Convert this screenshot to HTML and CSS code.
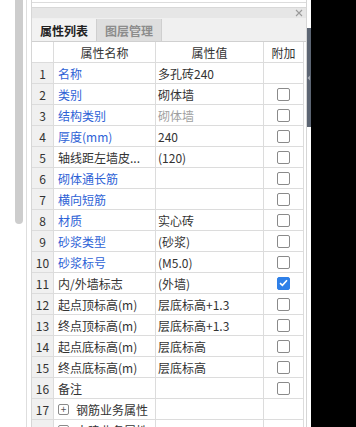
FILE: index.html
```html
<!DOCTYPE html>
<html lang="zh-CN">
<head>
<meta charset="UTF-8">
<title>属性列表</title>
<link rel="stylesheet" href="styles.css">
</head>
<body>

<div class="screen">
  <div class="gutter"><div class="gutter-thumb"></div></div>
  <div class="rule"></div>

  <div class="main">
    <div class="prev-box"></div>
    <div class="panel">
      <div class="titlebar">
        <svg class="close" width="8" height="8" viewBox="0 0 8 8"><path d="M1 1L7 7M7 1L1 7" stroke="#9a9a9a" stroke-width="1.1"/></svg>
      </div>
      <div class="tabs">
        <div class="tab active">属性列表</div>
        <div class="tab">图层管理</div>
      </div>

      <div class="grid">
        <div class="cell head"></div>
        <div class="cell head">属性名称</div>
        <div class="cell head">属性值</div>
        <div class="cell head">附加</div>

        <div class="cell num">1</div><div class="cell name blue">名称</div><div class="cell val">多孔砖240</div><div class="cell add"></div>
        <div class="cell num">2</div><div class="cell name blue">类别</div><div class="cell val">砌体墙</div><div class="cell add"><span class="box"></span></div>
        <div class="cell num">3</div><div class="cell name blue">结构类别</div><div class="cell val muted">砌体墙</div><div class="cell add"><span class="box"></span></div>
        <div class="cell num">4</div><div class="cell name blue">厚度(mm)</div><div class="cell val">240</div><div class="cell add"><span class="box"></span></div>
        <div class="cell num">5</div><div class="cell name">轴线距左墙皮...</div><div class="cell val">(120)</div><div class="cell add"><span class="box"></span></div>
        <div class="cell num">6</div><div class="cell name blue">砌体通长筋</div><div class="cell val"></div><div class="cell add"><span class="box"></span></div>
        <div class="cell num">7</div><div class="cell name blue">横向短筋</div><div class="cell val"></div><div class="cell add"><span class="box"></span></div>
        <div class="cell num">8</div><div class="cell name blue">材质</div><div class="cell val">实心砖</div><div class="cell add"><span class="box"></span></div>
        <div class="cell num">9</div><div class="cell name blue">砂浆类型</div><div class="cell val">(砂浆)</div><div class="cell add"><span class="box"></span></div>
        <div class="cell num">10</div><div class="cell name blue">砂浆标号</div><div class="cell val">(M5.0)</div><div class="cell add"><span class="box"></span></div>
        <div class="cell num">11</div><div class="cell name">内/外墙标志</div><div class="cell val">(外墙)</div><div class="cell add"><span class="box checked"><svg width="9" height="8" viewBox="0 0 9 8"><path d="M1 4.2L3.4 6.4L8 1.3" fill="none" stroke="#fff" stroke-width="1.6"/></svg></span></div>
        <div class="cell num">12</div><div class="cell name">起点顶标高(m)</div><div class="cell val">层底标高+1.3</div><div class="cell add"><span class="box"></span></div>
        <div class="cell num">13</div><div class="cell name">终点顶标高(m)</div><div class="cell val">层底标高+1.3</div><div class="cell add"><span class="box"></span></div>
        <div class="cell num">14</div><div class="cell name">起点底标高(m)</div><div class="cell val">层底标高</div><div class="cell add"><span class="box"></span></div>
        <div class="cell num">15</div><div class="cell name">终点底标高(m)</div><div class="cell val">层底标高</div><div class="cell add"><span class="box"></span></div>
        <div class="cell num">16</div><div class="cell name">备注</div><div class="cell val"></div><div class="cell add"><span class="box"></span></div>
        <div class="cell num">17</div><div class="cell name"><span class="plus">+</span>钢筋业务属性</div><div class="cell val"></div><div class="cell add"></div>
        <div class="cell num">18</div><div class="cell name"><span class="plus">+</span>土建业务属性</div><div class="cell val"></div><div class="cell add"></div>
      </div>
    </div>
  </div>

  <div class="vscroll">
    <div class="vthumb">
      <svg width="4" height="6" viewBox="0 0 4 6"><path d="M3 0.5L0.5 3L3 5.5Z" fill="#a8adb5"/></svg>
    </div>
  </div>
</div>

</body>
</html>
```

FILE: styles.css
```css
body { margin: 0; background: #000; font-family: "Noto Sans CJK SC", "Noto Sans", sans-serif; font-size: 12px; color: #333; }
.screen { display: flex; width: 311px; height: 427px; background: #fff; overflow: hidden; }

.gutter { width: 26px; flex-shrink: 0; }
.gutter-thumb { margin-left: 15px; width: 8px; height: 224px; background: #cdcdcd; border-radius: 0 0 4px 4px; }
.rule { width: 1px; background: #dedede; margin-right: 4px; flex-shrink: 0; }

.main { width: 276px; box-sizing: border-box; border-left: 1px solid #d6d6d6; border-right: 1px solid #d6d6d6; flex-shrink: 0; }
.prev-box { height: 3px; box-sizing: border-box; border-bottom: 1px solid #dcdcdc; margin-bottom: 4px; }

.titlebar { height: 11px; box-sizing: border-box; border-top: 1px solid #d8d8d8; background: #e6e6e6; display: flex; justify-content: flex-end; align-items: center; padding-right: 3px; }
.close { display: block; }

.tabs { display: flex; height: 24px; box-sizing: border-box; padding-top: 1px; background: #f0f0f0; border-bottom: 1px solid #d0d0d0; }
.tab { width: 65px; box-sizing: border-box; border-right: 1px solid #cfcfcf; display: flex; align-items: center; justify-content: center; font-weight: bold; color: #8c8c8c; background: #dedede; }
.tab.active { color: #222; background: #f2f2f2; }

.grid { display: grid; grid-template-columns: 22px 102px 108px 40px; grid-auto-rows: 21px; width: 272px; }
.cell { box-sizing: border-box; border-right: 1px solid #dcdcdc; border-bottom: 1px solid #dcdcdc; display: flex; align-items: center; white-space: nowrap; overflow: hidden; }
.cell.head { justify-content: center; color: #333; }
.cell.num { justify-content: center; background: #f0f0f0; color: #333; }
.cell.name { padding-left: 4px; }
.cell.val { padding-left: 2px; }
.cell.add { justify-content: center; }
.blue { color: #2e62d6; }
.muted { color: #a0a0a0; }

.box { width: 13px; height: 13px; box-sizing: border-box; border: 1px solid #8a8a8a; border-radius: 2px; background: #fff; display: flex; align-items: center; justify-content: center; }
.box.checked { background: #2f80e8; border-color: #2f80e8; }

.plus { width: 11px; height: 11px; box-sizing: border-box; border: 1px solid #8a8a8a; border-radius: 2px; display: inline-flex; align-items: center; justify-content: center; font-size: 10px; line-height: 1; color: #555; margin-right: 7px; }

.vscroll { width: 4px; flex-shrink: 0; }
.vthumb { margin-top: 28px; height: 99px; background: #5c6573; display: flex; align-items: center; }
.vthumb svg { display: block; }
```
